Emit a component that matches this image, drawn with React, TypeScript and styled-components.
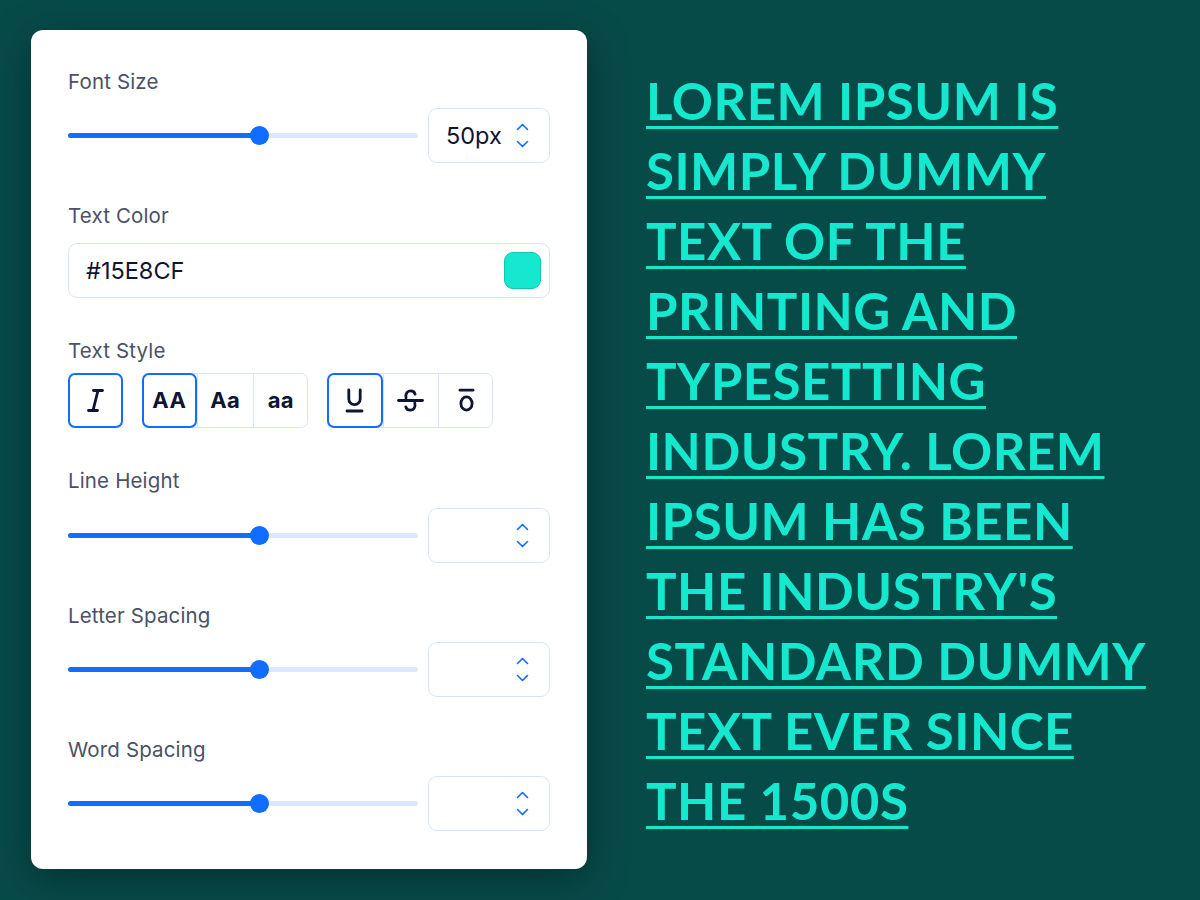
import React from 'react'
import styled, { createGlobalStyle } from 'styled-components'

const GlobalStyle = createGlobalStyle`
  html, body {
    margin: 0;
    padding: 0;
  }
  body {
    background: #074b49;
    font-family: Inter, "Noto Sans", sans-serif;
  }
`

const Page = styled.div`
  display: flex;
  align-items: flex-start;
  gap: 59px;
  width: 1200px;
  height: 900px;
  box-sizing: border-box;
  padding: 30px 40px 0 31px;
  overflow: hidden;
`

const Card = styled.div`
  flex: none;
  width: 556px;
  box-sizing: border-box;
  background: #ffffff;
  border-radius: 12px;
  padding: 41px 37px 38px;
  box-shadow: 0 10px 40px rgba(0, 20, 20, 0.45);
  display: flex;
  flex-direction: column;
  gap: 42px;
`

const Section = styled.div<{ $gap?: number }>`
  display: flex;
  flex-direction: column;
  gap: ${p => p.$gap ?? 15}px;
`

const Label = styled.div`
  font-size: 20.5px;
  line-height: 22px;
  color: #4c5167;
  letter-spacing: 0.15px;
`

const Row = styled.div`
  display: flex;
  align-items: center;
  gap: 10px;
  height: 55px;
`

const Track = styled.div`
  position: relative;
  width: 350px;
  height: 5px;
  border-radius: 3px;
  background: #dbe8fd;
`

const Fill = styled.div`
  position: absolute;
  left: 0;
  top: 0;
  bottom: 0;
  background: #116dff;
  border-radius: 3px 0 0 3px;
`

const Thumb = styled.div`
  position: absolute;
  top: 50%;
  width: 19px;
  height: 19px;
  margin: -9.5px 0 0 -9.5px;
  border-radius: 50%;
  background: #116dff;
`

const NumberBox = styled.div`
  width: 122px;
  height: 55px;
  box-sizing: border-box;
  border: 1.5px solid #d7e5fc;
  border-radius: 9px;
  display: flex;
  align-items: center;
  padding: 0 20px 0 17px;
  font-size: 23.5px;
  color: #0e1433;
`

const Value = styled.span`
  flex: 1;
`

const Stepper = styled.div`
  display: flex;
  flex-direction: column;
  gap: 9px;
  color: #116dff;
`

const ColorInput = styled.div`
  height: 55px;
  box-sizing: border-box;
  border: 1.5px solid #d7e5fc;
  border-radius: 9px;
  display: flex;
  align-items: center;
  justify-content: space-between;
  padding: 0 8px 0 17px;
  font-size: 23.5px;
  color: #0e1433;
`

const Swatch = styled.div<{ $color: string }>`
  width: 37px;
  height: 37px;
  box-sizing: border-box;
  border-radius: 9px;
  background: ${p => p.$color};
  border: 1px solid #10c7b1;
`

const StyleRow = styled.div`
  display: flex;
  gap: 19px;
  height: 55px;
`

const Group = styled.div`
  display: flex;
  border: 1.5px solid #d7e5fc;
  border-radius: 7px;
  box-sizing: border-box;
  height: 55px;
  & + & {
    margin-left: 1px;
  }
`

const ToggleBtn = styled.div<{ $active?: boolean }>`
  position: relative;
  width: 55.5px;
  height: 55px;
  margin: -1.5px 0;
  box-sizing: border-box;
  display: flex;
  align-items: center;
  justify-content: center;
  font-family: Inter, sans-serif;
  font-weight: 700;
  font-size: 22px;
  letter-spacing: 0.3px;
  color: #0e1433;
  border-radius: 7px;
  border: ${p => (p.$active ? '2.5px solid #116dff' : 'none')};
  & + & {
    border-left: ${p => (p.$active ? '2.5px solid #116dff' : '1.5px solid #d7e5fc')};
    border-radius: ${p => (p.$active ? '7px' : '0')};
  }
  &:first-child {
    margin-left: -1.5px;
  }
  &:last-child {
    margin-right: -1.5px;
  }
`

const Single = styled(ToggleBtn)`
  width: 55px;
  margin: 0;
  &:first-child {
    margin-left: 0;
  }
  &:last-child {
    margin-right: 0;
  }
`

const Preview = styled.p`
  margin: 36px 0 0;
  font-family: Lato, "Noto Sans", sans-serif;
  font-weight: 700;
  font-size: 51px;
  line-height: 70px;
  letter-spacing: 0.5px;
  color: #15e8cf;
  text-transform: uppercase;
  text-decoration: underline;
  text-decoration-thickness: 3px;
  text-underline-offset: 6px;
`

const Chevron = ({ up }: { up?: boolean }) => (
  <svg width="13" height="8" viewBox="0 0 13 8" fill="none">
    <path
      d={up ? 'M1.5 6.5 L6.5 1.5 L11.5 6.5' : 'M1.5 1.5 L6.5 6.5 L11.5 1.5'}
      stroke="currentColor"
      strokeWidth="1.6"
      strokeLinecap="round"
      strokeLinejoin="round"
    />
  </svg>
)

const Slider = ({ value }: { value: number }) => (
  <Track>
    <Fill style={{ width: `${value}%` }} />
    <Thumb style={{ left: `${value}%` }} />
  </Track>
)

const NumberField = ({ value }: { value?: string }) => (
  <NumberBox>
    <Value>{value}</Value>
    <Stepper>
      <Chevron up />
      <Chevron />
    </Stepper>
  </NumberBox>
)

const stroke = { stroke: '#0e1433', strokeWidth: 2.8, fill: 'none', strokeLinecap: 'round' as const }

const ItalicIcon = () => (
  <svg width="17" height="25" viewBox="0 0 17 25">
    <path d="M6.5 2.5 H15.5 M11 2.5 L6 22.5 M1.5 22.5 H10.5" {...stroke} />
  </svg>
)

const UnderlineIcon = () => (
  <svg width="19" height="25" viewBox="0 0 19 25">
    <path d="M3.8 2 V11 A5.7 5.7 0 0 0 15.2 11 V2" {...stroke} />
    <path d="M2 23 H17" {...stroke} />
  </svg>
)

const StrikeIcon = () => (
  <svg width="27" height="25" viewBox="0 0 27 25">
    <path d="M9 10 C8.2 5.8 10.4 2.8 13.5 2.8 C16 2.8 17.6 4 18.1 6.2" {...stroke} />
    <path d="M1.5 12.5 H25.5" {...stroke} />
    <path d="M17.8 15 C18.8 19.2 16.6 22.2 13.5 22.2 C10.8 22.2 9.2 21 8.8 18.8" {...stroke} />
  </svg>
)

const OverlineIcon = () => (
  <svg width="17" height="25" viewBox="0 0 17 25">
    <path d="M2 2.2 H15" {...stroke} />
    <ellipse cx="8.5" cy="15.5" rx="5.6" ry="6.6" {...stroke} />
  </svg>
)

export default function App() {
  return (
    <Page>
      <GlobalStyle />
      <Card>
        <Section>
          <Label>Font Size</Label>
          <Row>
            <Slider value={54.8} />
            <NumberField value="50px" />
          </Row>
        </Section>
        <Section $gap={16}>
          <Label>Text Color</Label>
          <ColorInput>
            <span>#15E8CF</span>
            <Swatch $color="#15e8cf" />
          </ColorInput>
        </Section>
        <Section $gap={11}>
          <Label>Text Style</Label>
          <StyleRow>
            <Single $active>
              <ItalicIcon />
            </Single>
            <Group>
              <ToggleBtn $active>AA</ToggleBtn>
              <ToggleBtn>Aa</ToggleBtn>
              <ToggleBtn>aa</ToggleBtn>
            </Group>
            <Group>
              <ToggleBtn $active>
                <UnderlineIcon />
              </ToggleBtn>
              <ToggleBtn>
                <StrikeIcon />
              </ToggleBtn>
              <ToggleBtn>
                <OverlineIcon />
              </ToggleBtn>
            </Group>
          </StyleRow>
        </Section>
        <Section $gap={16}>
          <Label>Line Height</Label>
          <Row>
            <Slider value={54.8} />
            <NumberField />
          </Row>
        </Section>
        <Section>
          <Label>Letter Spacing</Label>
          <Row>
            <Slider value={54.8} />
            <NumberField />
          </Row>
        </Section>
        <Section>
          <Label>Word Spacing</Label>
          <Row>
            <Slider value={54.8} />
            <NumberField />
          </Row>
        </Section>
      </Card>
      <Preview>
        Lorem Ipsum is simply dummy text of the printing and typesetting industry. Lorem Ipsum has
        been the industry's standard dummy text ever since the 1500s
      </Preview>
    </Page>
  )
}
